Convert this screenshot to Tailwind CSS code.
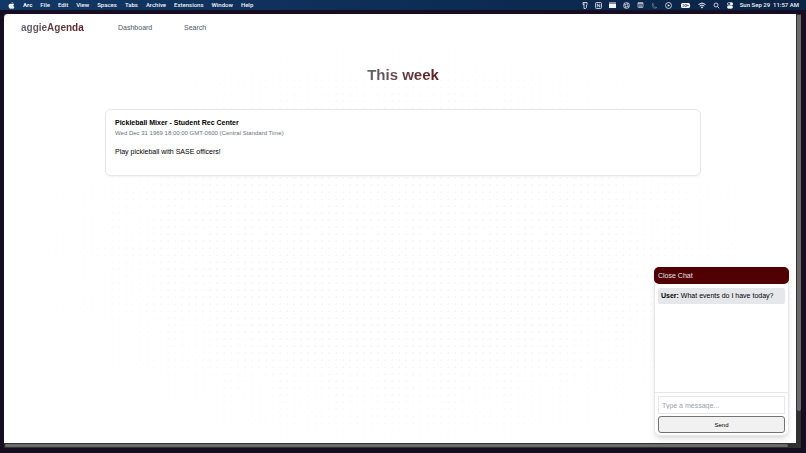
<!DOCTYPE html>
<html lang="en">
<head>
  <meta charset="UTF-8" />
  <meta name="viewport" content="width=device-width, initial-scale=1.0" />
  <title>aggieAgenda</title>
  <script src="https://cdn.jsdelivr.net/npm/@tailwindcss/browser@4"></script>
</head>
<body class="h-screen flex flex-col overflow-hidden bg-[#160d20] font-['Liberation_Sans',sans-serif] text-black">

  <!-- Menu bar -->
  <header class="h-[10px] shrink-0 flex items-center justify-between pl-2 pr-[7px] bg-linear-to-r from-[#113866] to-[#0a2346] text-gray-100 font-['Roboto',sans-serif] text-[6px] leading-[10px] font-medium whitespace-nowrap">
    <nav class="flex items-center gap-2">
      <svg class="w-[7px] h-[7px]" viewBox="0 0 12 14" fill="currentColor"><path d="M8.300 0c.1 1.500-1 2.900-2.500 3C5.700 1.600 6.900.2 8.300 0zM6 3.900c.7 0 1.500-.7 2.700-.7 1 0 2 .5 2.600 1.400-2.300 1.400-1.900 4.500.5 5.400-.5 1.500-1.700 3.700-3 3.700-.9 0-1.300-.6-2.500-.6s-1.600.6-2.500.6C2.100 13.700 0 10.300 0 7.600c0-2.800 1.700-4.300 3.400-4.300 1.100 0 1.900.6 2.600.6z"/></svg>
      <span class="font-bold">Arc</span>
      <span>File</span>
      <span>Edit</span>
      <span>View</span>
      <span>Spaces</span>
      <span>Tabs</span>
      <span>Archive</span>
      <span>Extensions</span>
      <span>Window</span>
      <span>Help</span>
    </nav>
    <div class="flex items-center gap-[9px]">
      <div class="flex items-center gap-[7px]">
        <svg class="w-[6px] h-[7px]" viewBox="0 0 12 14" fill="none" stroke="currentColor" stroke-width="1.600"><path d="M2 1h8v4l-1 1v5l-2 2H4V6L2 5z"/><path d="M2 4h4"/></svg>
        <svg class="w-[7px] h-[7px]" viewBox="0 0 14 14" fill="none" stroke="currentColor" stroke-width="1.500"><rect x="1" y="1" width="12" height="12" rx="2"/><path d="M4.500 10.500v-7l5 7v-7"/></svg>
        <svg class="w-[7px] h-[6px]" viewBox="0 0 14 12" fill="currentColor"><path d="M0 1h14v2H0zM0 4h14v8H0z"/></svg>
        <svg class="w-[7px] h-[7px]" viewBox="0 0 14 14" fill="none" stroke="currentColor" stroke-width="1.300"><circle cx="7" cy="7" r="6"/><circle cx="7" cy="7" r="3"/><path d="M7 4L11 3M10 7l1 4M7 10l-4 1M4 7L3 3"/></svg>
        <svg class="w-[7px] h-[6px]" viewBox="0 0 12 12" fill="none" stroke="currentColor" stroke-width="1.300"><rect x="1" y="1" width="10" height="10" rx="1"/><path d="M1 3h10M3 6h6M3 8.500h6"/></svg>
        <svg class="w-[7px] h-[7px] opacity-40" viewBox="0 0 14 14" fill="none" stroke="currentColor" stroke-width="1.500"><path d="M4 2q-1 9 8 9-5 3-8 0T4 2z"/></svg>
        <svg class="w-[7px] h-[7px]" viewBox="0 0 14 14" fill="none" stroke="currentColor" stroke-width="1.500"><circle cx="7" cy="7" r="6"/><path d="M5.500 4.500v5L10 7z" fill="currentColor" stroke="none"/></svg>
      </div>
      <div class="flex items-center gap-[7px]">
        <svg class="w-[10px] h-[5px]" viewBox="0 0 20 10"><rect width="18" height="10" rx="3" fill="white"/><path d="M18.500 3.500q1.500 1.500 0 3z" fill="white"/><path d="M3 3h3v4H3M8 3v4h3V3zM13 3l-1 2h3l-1 2" fill="none" stroke="#0a2346"/></svg>
        <svg class="w-[8px] h-[7px]" viewBox="0 0 16 14" fill="none" stroke="currentColor" stroke-width="2"><path d="M1 5q7-6 14 0M3.500 8q4.500-4 9 0"/><path d="M5.500 10q2.500-2 5 0L8 13z" fill="currentColor" stroke="none"/></svg>
        <svg class="w-[7px] h-[7px]" viewBox="0 0 12 14" fill="none" stroke="currentColor" stroke-width="1.600"><circle cx="5" cy="6" r="4"/><path d="M8 9l3.500 3.500"/></svg>
        <svg class="w-[6px] h-[7px]" viewBox="0 0 12 14" fill="none" stroke="currentColor" stroke-width="1.500"><rect x="1" y="1.500" width="10" height="4.500" rx="1.500"/><path d="M7 2h3.500v3.500H7z" fill="currentColor"/><rect x="1" y="8" width="10" height="4.500" rx="1.500" fill="currentColor"/></svg>
        <time>Sun Sep 29&nbsp; 11:57 AM</time>
      </div>
    </div>
  </header>

  <!-- Browser window -->
  <div class="flex-1 min-h-0 mt-1 mb-[5px] ml-1 mr-[5px] grid grid-cols-[1fr_5px] grid-rows-[1fr_5px] bg-[#303030]">
    <div class="relative min-h-0 overflow-hidden rounded-tl-sm bg-white">
      <div class="absolute inset-0 bg-[radial-gradient(#e5e5e5_1px,transparent_1px)] bg-size-[7px_7px] mask-[radial-gradient(ellipse_at_50%_55%,black_35%,transparent_68%)] opacity-35"></div>

      <div class="relative">
        <nav class="flex items-center pl-[17px] pt-2 text-[7px] leading-[12px] text-gray-600">
          <a href="#" class="w-[97px] text-[10px] font-bold"><span class="bg-linear-to-r from-[#62636f] to-[#5c1c20] bg-clip-text text-transparent">aggieAgenda</span></a>
          <a href="#" class="w-[66px]">Dashboard</a>
          <a href="#">Search</a>
        </nav>

        <main class="pl-[101px] pr-[95px]">
          <h1 class="mt-8 text-center text-[15px] leading-[18px] font-bold"><span class="bg-linear-to-r from-[#62636f] to-[#5c1c20] bg-clip-text text-transparent">This week</span></h1>

          <article class="mt-[25px] rounded-md border border-gray-200 bg-white px-[9px] pt-2 pb-[18px] shadow-xs">
            <h2 class="text-[7px] leading-[10px] font-bold">Pickleball Mixer - Student Rec Center</h2>
            <p class="text-[6px] leading-[10px] text-gray-500">Wed Dec 31 1969 18:00:00 GMT-0600 (Central Standard Time)</p>
            <p class="mt-[9px] text-[7px] leading-[10px]">Play pickleball with SASE officers!</p>
          </article>
        </main>
      </div>

      <!-- Chat -->
      <section class="absolute right-[7px] bottom-[7px] w-[135px] rounded-md bg-white border border-gray-200 shadow-md text-[7px] leading-[10px]">
        <button id="toggleChat" type="button" class="-mt-px -mx-px w-[135px] h-[17px] block rounded-[5px] bg-[#500000] px-[4px] text-left text-gray-200">Close Chat</button>
        <div id="chatBody">
          <div id="messages" class="h-[109px] px-[3px] pt-[4px] border-b border-gray-200">
            <p class="rounded-xs bg-gray-200 px-[3px] py-[3px]"><strong>User:</strong> What events do I have today?</p>
          </div>
          <form id="chatForm" class="px-[3px] pt-[3px] pb-[2px]">
            <input type="text" aria-label="Message" placeholder="Type a message..." class="block w-full h-[18px] border border-gray-200 px-[3px] placeholder:text-gray-400 outline-none" />
            <button type="submit" class="mt-[2px] block w-full h-[17px] rounded-[3px] border border-neutral-500 bg-[#f1f1f1] text-[6px]">Send</button>
          </form>
        </div>
      </section>
    </div>

    <!-- Scrollbars -->
    <div class="pt-px pl-px pb-8"><div class="h-full rounded-b-sm bg-[#6b6b6b]"></div></div>
    <div class="pt-px pl-px pr-2"><div class="h-[3px] rounded-sm bg-[#6b6b6b]"></div></div>
  </div>

  <script>
    const messages = document.getElementById("messages");
    const chatForm = document.getElementById("chatForm");

    document.getElementById("toggleChat").addEventListener("click", (e) => {
      const closed = document.getElementById("chatBody").classList.toggle("hidden");
      e.target.textContent = closed ? "Open Chat" : "Close Chat";
    });

    chatForm.addEventListener("submit", (e) => {
      e.preventDefault();
      const input = chatForm.querySelector("input");
      if (!input.value.trim()) return;
      const p = messages.firstElementChild.cloneNode(true);
      p.lastChild.textContent = " " + input.value;
      messages.appendChild(p);
      input.value = "";
    });
  </script>
</body>
</html>
